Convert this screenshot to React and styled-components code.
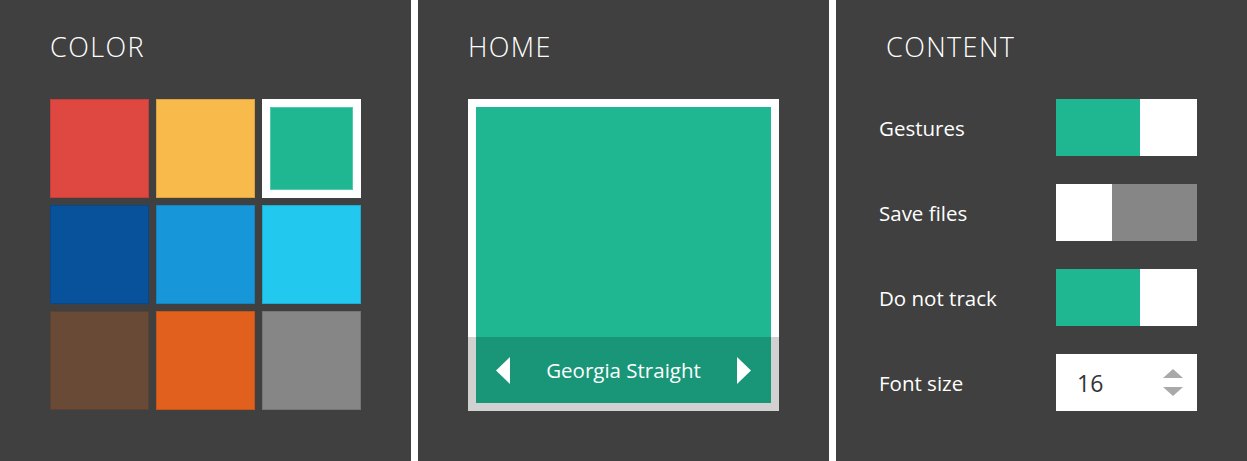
import React from "react";
import styled, { createGlobalStyle } from "styled-components";

const GlobalStyle = createGlobalStyle`
  html, body {
    margin: 0;
    padding: 0;
    background: #404040;
  }
  body {
    font-family: "Open Sans", "Noto Sans", sans-serif;
  }
`;

const TEAL = "#1eb792";

const Board = styled.div`
  display: flex;
  gap: 7px;
  width: 1247px;
  height: 461px;
  background: #ffffff;
`;

const Panel = styled.section`
  flex: 0 0 411px;
  box-sizing: border-box;
  height: 100%;
  background: #404040;
  padding: 33px 50px 0 ${(p) => p.$left || 50}px;
`;

const Heading = styled.h2`
  margin: 0 0 38px ${(p) => p.$indent || 0}px;
  font-size: 27px;
  line-height: 28px;
  font-weight: 300;
  letter-spacing: 1.4px;
  color: #ffffff;
`;

const SwatchGrid = styled.div`
  display: grid;
  grid-template-columns: repeat(3, 99px);
  grid-auto-rows: 99px;
  gap: 7px;
`;

const Swatch = styled.div`
  box-sizing: border-box;
  background: ${(p) => p.$color};
  border: ${(p) => (p.$selected ? "8px solid #ffffff" : "1px solid rgba(0,0,0,0.12)")};
  box-shadow: ${(p) => (p.$selected ? `inset 0 0 0 1px rgba(255,255,255,0.25)` : "none")};
`;

const PreviewFrame = styled.div`
  position: relative;
  box-sizing: border-box;
  width: 311px;
  height: 312px;
  border: 8px solid #ffffff;
  background: ${TEAL};
`;

const Caption = styled.div`
  position: absolute;
  left: -8px;
  right: -8px;
  bottom: -8px;
  height: 74px;
  box-sizing: border-box;
  padding: 0 28px 8px 28px;
  background: rgba(0, 0, 0, 0.18);
  display: flex;
  align-items: center;
  justify-content: space-between;
  color: #ffffff;
  font-size: 20.5px;
`;

const CaptionTitle = styled.span`
  line-height: 1;
`;

const Arrow = ({ dir }) => (
  <svg width="14" height="27" viewBox="0 0 14 27">
    {dir === "left" ? (
      <polygon points="14,0 14,27 0,13.5" fill="#fff" />
    ) : (
      <polygon points="0,0 0,27 14,13.5" fill="#fff" />
    )}
  </svg>
);

const SettingsList = styled.div`
  display: flex;
  flex-direction: column;
  gap: 28px;
`;

const SettingRow = styled.div`
  display: flex;
  align-items: center;
  justify-content: space-between;
  height: 57px;
`;

const Label = styled.span`
  color: #ffffff;
  font-size: 20.5px;
`;

const Toggle = styled.div`
  display: flex;
  width: 141px;
  height: 57px;
`;

const ToggleHalf = styled.div`
  width: ${(p) => p.$w}px;
  background: ${(p) => p.$color};
`;

const NumberBox = styled.div`
  box-sizing: border-box;
  width: 141px;
  height: 57px;
  background: #ffffff;
  display: flex;
  align-items: center;
  justify-content: space-between;
  padding: 0 14px 0 21px;
  font-size: 23px;
  color: #333333;
`;

const Spinner = () => (
  <svg width="20" height="28" viewBox="0 0 20 28">
    <polygon points="10,0 20,9 0,9" fill="#a9a9a9" />
    <polygon points="0,18 20,18 10,27" fill="#a9a9a9" />
  </svg>
);

const swatches = [
  "#df4841",
  "#f8ba4a",
  TEAL,
  "#08529b",
  "#1896da",
  "#22c8ee",
  "#694a37",
  "#e2601d",
  "#868686",
];

function Switch({ on }) {
  return on ? (
    <Toggle>
      <ToggleHalf $w={84} $color={TEAL} />
      <ToggleHalf $w={57} $color="#ffffff" />
    </Toggle>
  ) : (
    <Toggle>
      <ToggleHalf $w={56} $color="#ffffff" />
      <ToggleHalf $w={85} $color="#868686" />
    </Toggle>
  );
}

export default function App() {
  return (
    <>
      <GlobalStyle />
      <Board>
        <Panel>
          <Heading>COLOR</Heading>
          <SwatchGrid>
            {swatches.map((c, i) => (
              <Swatch key={i} $color={c} $selected={i === 2} />
            ))}
          </SwatchGrid>
        </Panel>

        <Panel>
          <Heading>HOME</Heading>
          <PreviewFrame>
            <Caption>
              <Arrow dir="left" />
              <CaptionTitle>Georgia Straight</CaptionTitle>
              <Arrow dir="right" />
            </Caption>
          </PreviewFrame>
        </Panel>

        <Panel $left={43}>
          <Heading $indent={7}>CONTENT</Heading>
          <SettingsList>
            <SettingRow>
              <Label>Gestures</Label>
              <Switch on />
            </SettingRow>
            <SettingRow>
              <Label>Save files</Label>
              <Switch />
            </SettingRow>
            <SettingRow>
              <Label>Do not track</Label>
              <Switch on />
            </SettingRow>
            <SettingRow>
              <Label>Font size</Label>
              <NumberBox>
                <span>16</span>
                <Spinner />
              </NumberBox>
            </SettingRow>
          </SettingsList>
        </Panel>
      </Board>
    </>
  );
}
